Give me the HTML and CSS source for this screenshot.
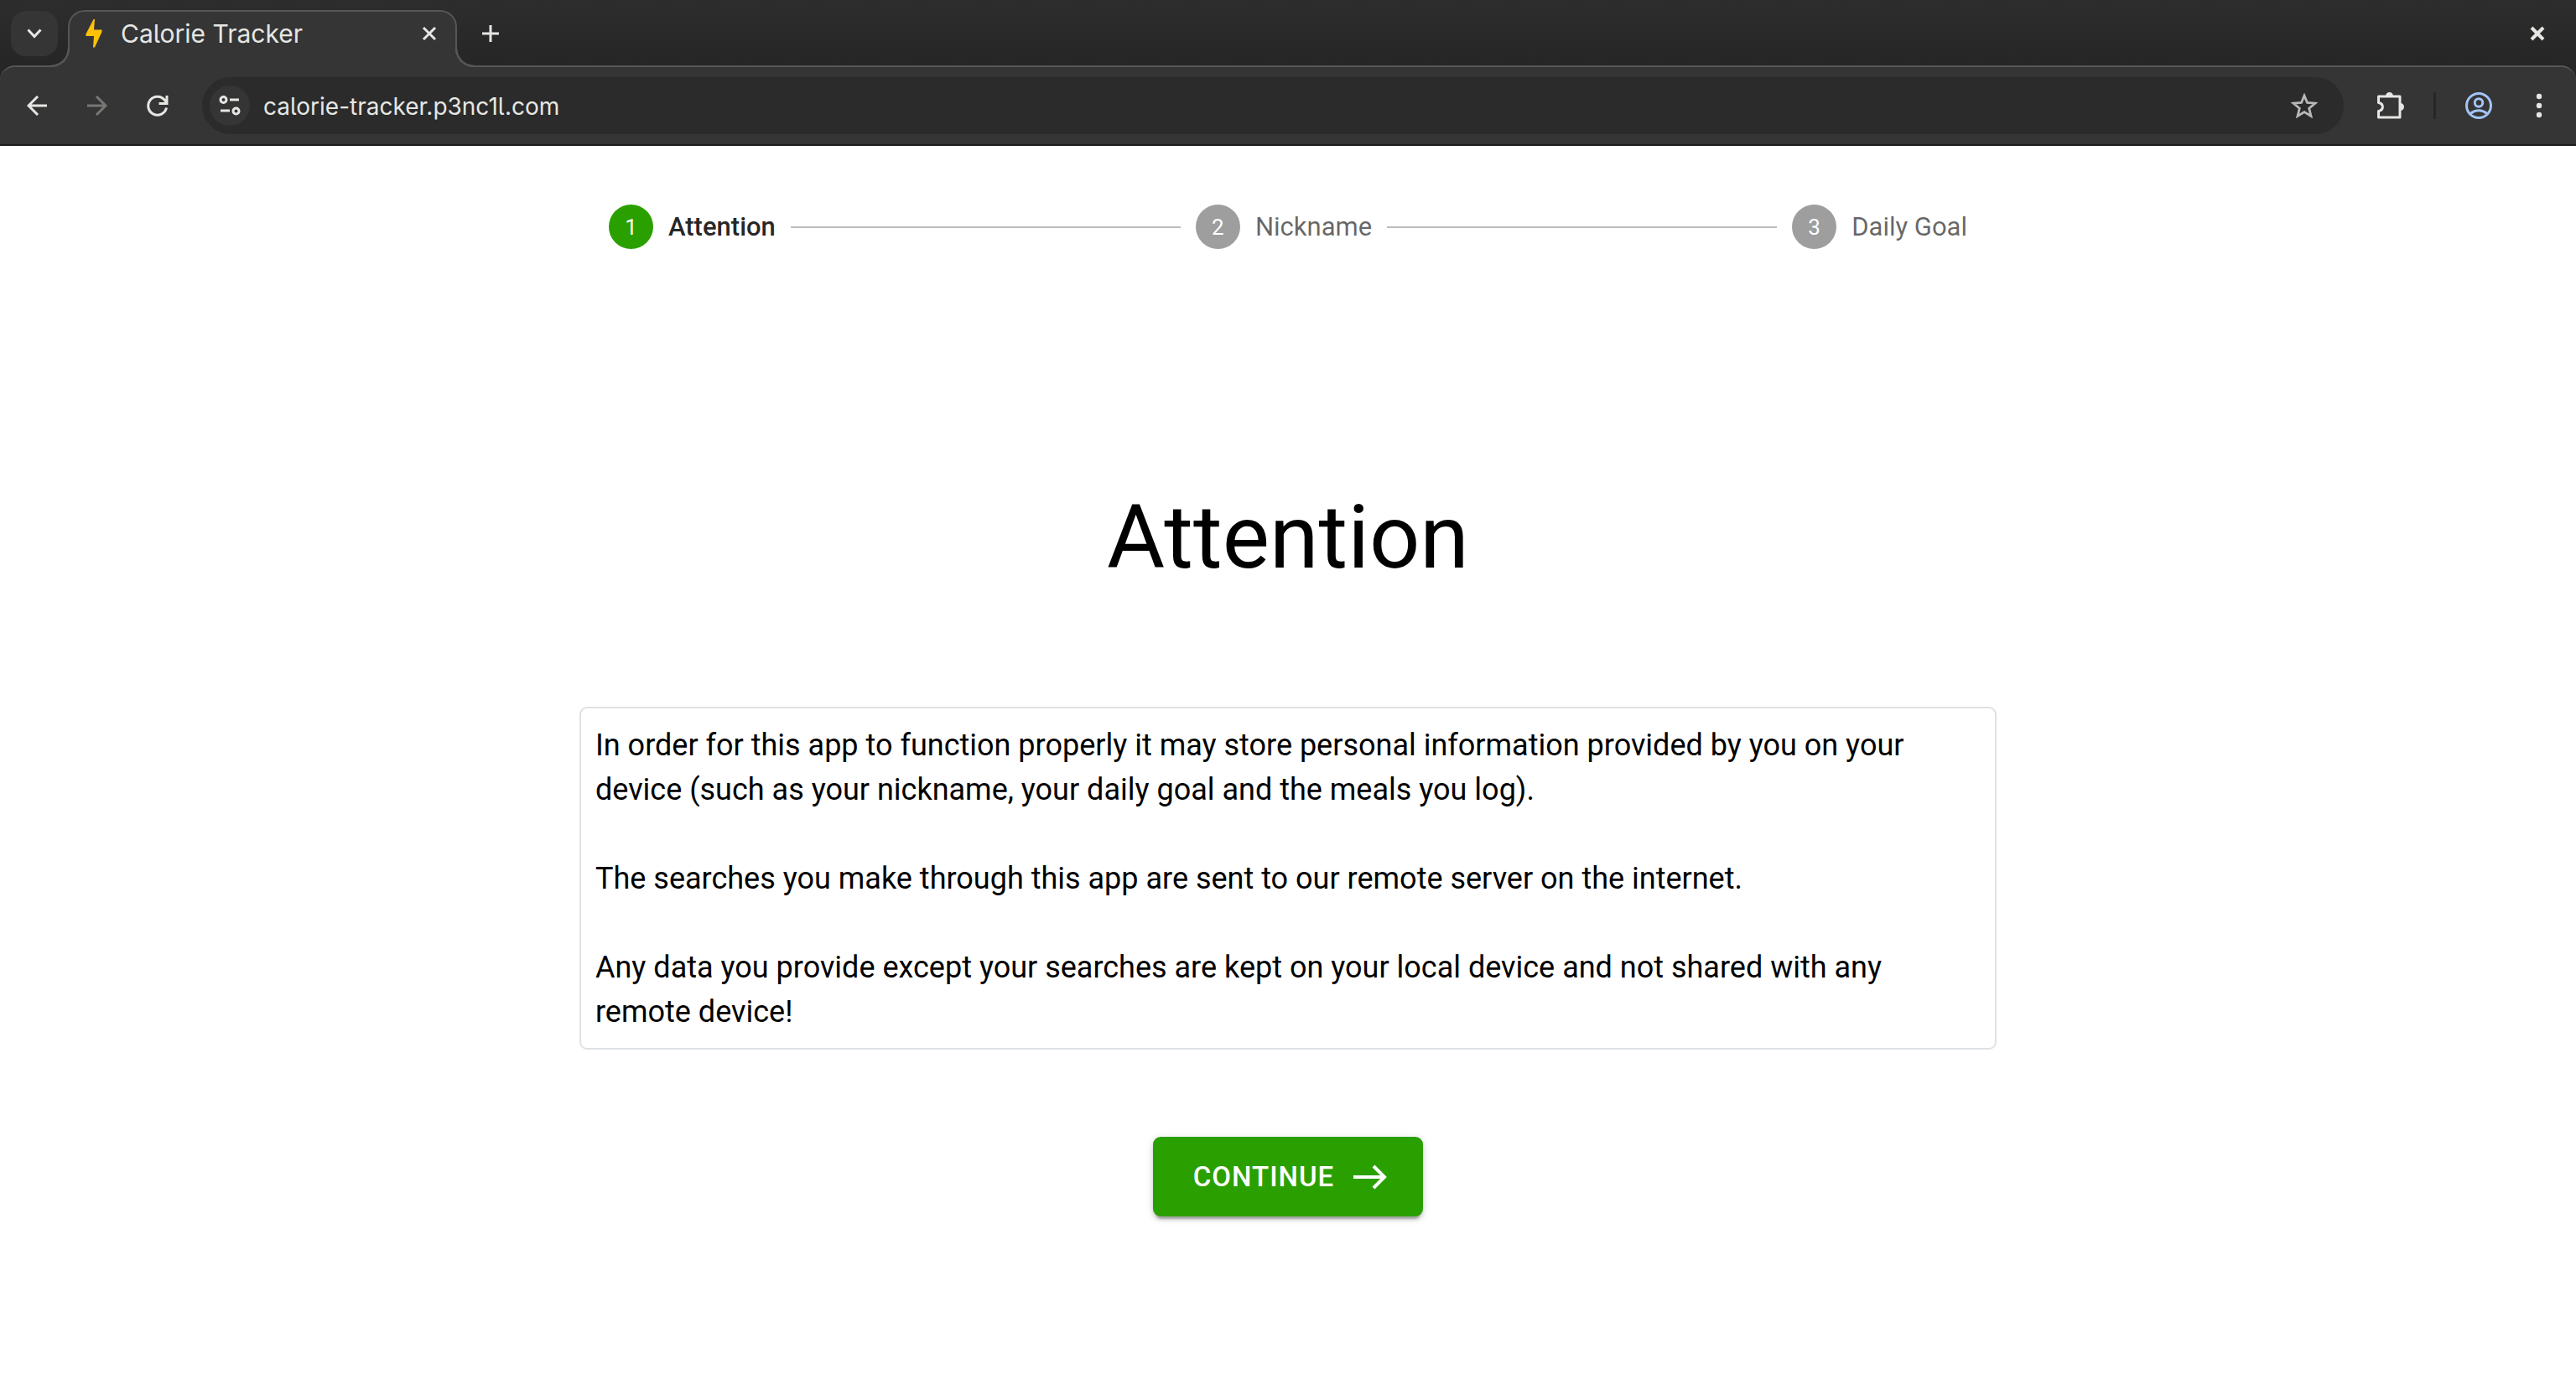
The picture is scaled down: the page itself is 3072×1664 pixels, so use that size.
FILE: index.html
```html
<!DOCTYPE html>
<html lang="en">
<head>
<meta charset="utf-8">
<meta name="viewport" content="width=device-width, initial-scale=1">
<title>Calorie Tracker</title>
<link rel="stylesheet" href="styles.css">
</head>
<body>
<header class="browser">
  <div class="tab-strip">
    <button class="tab-search" type="button" aria-label="Search tabs">
      <svg width="20" height="14" viewBox="0 0 20 14" fill="none" stroke="currentColor" stroke-width="3"><path d="M2.500 2.500 10 10.500 17.500 2.500"/></svg>
    </button>
    <div class="tab">
      <svg class="favicon" width="20" height="34" viewBox="0 0 20 34" fill="#ffc107"><path d="M9.500 0H11L10 12.500H19.500V15L11 33.500H9L10 20H.500V17.500Z"/></svg>
      <span class="tab-title">Calorie Tracker</span>
      <button class="icon-button small" type="button" aria-label="Close tab">
        <svg width="18" height="18" viewBox="0 0 18 18" fill="none" stroke="currentColor" stroke-width="3"><path d="m2 2 14 14M16 2 2 16"/></svg>
      </button>
    </div>
    <button class="icon-button new-tab" type="button" aria-label="New tab">
      <svg width="22" height="22" viewBox="0 0 22 22" fill="none" stroke="currentColor" stroke-width="3"><path d="M11 1v20M1 11h20"/></svg>
    </button>
    <button class="icon-button window-close" type="button" aria-label="Close window">
      <svg width="18" height="18" viewBox="0 0 18 18" fill="none" stroke="currentColor" stroke-width="4"><path d="m2 2 14 14M16 2 2 16"/></svg>
    </button>
  </div>
  <div class="toolbar">
    <nav class="nav-buttons" aria-label="Browser navigation">
      <button class="icon-button" type="button" aria-label="Back">
        <svg width="24" height="24" viewBox="0 0 24 24" fill="none" stroke="currentColor" stroke-width="3"><path d="M24 12H2M13 1 2 12l11 11"/></svg>
      </button>
      <button class="icon-button" type="button" aria-label="Forward" disabled>
        <svg width="24" height="24" viewBox="0 0 24 24" fill="none" stroke="currentColor" stroke-width="3"><path d="M0 12h22M11 1l11 11-11 11"/></svg>
      </button>
      <button class="icon-button" type="button" aria-label="Reload">
        <svg width="26" height="26" viewBox="0 0 26 26" fill="none" stroke="currentColor" stroke-width="3"><path d="M23.500 15.500A11 11 0 1 1 21.500 6.500L23.500 9.500M24 1v9.500H14.500"/></svg>
      </button>
    </nav>
    <div class="omnibox">
      <button class="site-info" type="button" aria-label="View site information">
        <svg width="26" height="26" viewBox="0 0 26 26" fill="none" stroke="currentColor" stroke-width="3"><circle cx="5.500" cy="6" r="3.500"/><path d="M13 6h11M2 19h11"/><circle cx="20.500" cy="19.500" r="3.500"/></svg>
      </button>
      <input class="address" type="text" value="calorie-tracker.p3nc1l.com" aria-label="Address" spellcheck="false">
      <button class="bookmark" type="button" aria-label="Bookmark this page">
        <svg width="32" height="30" viewBox="0 0 32 30" fill="none" stroke="currentColor" stroke-width="2.800"><path d="M16 3 19.500 11.500 29 12.200 21.700 18.300 24 27.500 16 22.600 8 27.500 10.300 18.300 3 12.200 12.500 11.500Z"/></svg>
      </button>
    </div>
    <div class="tools">
      <button class="icon-button extensions" type="button" aria-label="Extensions">
        <svg width="34" height="34" viewBox="0 0 34 34"><path fill="none" stroke="currentColor" stroke-width="3" stroke-linejoin="round" d="M2.500 6H28V31H2.500V23.500C9 22.500 9 14.500 2.500 13.500Z"/><path fill="currentColor" d="M11 5.500a4.500 4.500 0 0 1 9 0zM28.500 14a4.500 4.500 0 0 1 0 9z"/></svg>
      </button>
      <span class="divider"></span>
      <button class="icon-button profile" type="button" aria-label="Profile">
        <svg width="34" height="34" viewBox="0 0 34 34" fill="none" stroke="currentColor" stroke-width="3"><circle cx="17" cy="17" r="14.500"/><circle cx="17" cy="13.500" r="4.700"/><path d="M7 26.500Q17 19 27 26.500"/></svg>
      </button>
      <button class="icon-button" type="button" aria-label="Menu">
        <svg width="8" height="30" viewBox="0 0 8 30" fill="currentColor"><circle cx="4" cy="4" r="3.200"/><circle cx="4" cy="15" r="3.200"/><circle cx="4" cy="26" r="3.200"/></svg>
      </button>
    </div>
  </div>
</header>

<main class="page">
  <ol class="stepper">
    <li class="step active" aria-current="step"><span class="step-icon">1</span>Attention</li>
    <li class="connector" aria-hidden="true"></li>
    <li class="step"><span class="step-icon">2</span>Nickname</li>
    <li class="connector" aria-hidden="true"></li>
    <li class="step"><span class="step-icon">3</span>Daily Goal</li>
  </ol>
  <h1 class="title">Attention</h1>
  <section class="notice">
    <p>In order for this app to function properly it may store personal information provided by you on your device (such as your nickname, your daily goal and the meals you log).</p>
    <p>The searches you make through this app are sent to our remote server on the internet.</p>
    <p>Any data you provide except your searches are kept on your local device and not shared with any remote device!</p>
  </section>
  <button class="continue" type="button">CONTINUE
    <svg width="42" height="30" viewBox="0 0 42 30" fill="none" stroke="currentColor" stroke-width="4"><path d="M1 15H38M25 2 38 15 25 28"/></svg>
  </button>
</main>
</body>
</html>
```
FILE: styles.css
```css
* {
  box-sizing: border-box;
}

body {
  margin: 0;
  background: #fff;
  color: #000;
  font-family: Roboto, "Liberation Sans", sans-serif;
}

button {
  margin: 0;
  padding: 0;
  border: 0;
  background: none;
  color: inherit;
  font: inherit;
}

svg {
  display: block;
}

/* Browser window */
.browser {
  background: linear-gradient(#2d2d2d, #262626 78px);
  color: #e6e6e3;
  font-family: Inter, "Liberation Sans", sans-serif;
  font-size: 28px;
  font-feature-settings: "cv05";
}

.tab-strip {
  display: flex;
  align-items: center;
  height: 80px;
  padding: 0 16px 0 13px;
}

.tab-search {
  display: grid;
  place-items: center;
  width: 56px;
  height: 54px;
  border-radius: 18px;
  background: #353535;
}

.tab {
  position: relative;
  z-index: 1;
  display: flex;
  align-items: center;
  align-self: flex-end;
  width: 464px;
  height: 68px;
  margin-left: 12px;
  padding: 0 13px 14px 19px;
  border: 2px solid #565656;
  border-bottom: 0;
  border-radius: 20px 20px 0 0;
  background: #353535;
}

/* Curved feet joining the tab to the toolbar */
.tab::before,
.tab::after {
  content: "";
  position: absolute;
  bottom: 0;
  width: 22px;
  height: 22px;
}

.tab::before {
  left: -22px;
  background: radial-gradient(circle at 0 0, transparent 19px, #565656 20px 22px, #353535 22px);
}

.tab::after {
  right: -22px;
  background: radial-gradient(circle at 100% 0, transparent 19px, #565656 20px 22px, #353535 22px);
}

.tab-title {
  flex: 1;
  margin-left: 22px;
  font-size: 30px;
}

.icon-button {
  display: grid;
  place-items: center;
  width: 60px;
  height: 60px;
}

.icon-button:disabled {
  color: #777773;
}

.small {
  width: 36px;
  height: 36px;
}

.new-tab {
  margin-left: 10px;
}

.window-close {
  margin-left: auto;
}

.toolbar {
  display: flex;
  align-items: center;
  margin-top: -2px;
  padding: 12px 14px;
  border-top: 2px solid #565656;
  border-bottom: 2px solid #1c1c1c;
  border-radius: 18px 18px 0 0;
  background: #353535;
}

.nav-buttons {
  display: flex;
  gap: 12px;
}

.omnibox {
  display: flex;
  flex: 1;
  align-items: center;
  height: 68px;
  margin: 0 26px 0 23px;
  padding: 0 31px 0 9px;
  border-radius: 34px;
  background: #2b2b2b;
}

.site-info {
  display: grid;
  place-items: center;
  width: 48px;
  height: 48px;
  border-radius: 50%;
  background: #353535;
}

.address {
  flex: 1;
  min-width: 0;
  margin-left: 16px;
  padding: 2px 0 0;
  border: 0;
  outline: 0;
  background: none;
  color: inherit;
  font: inherit;
  font-feature-settings: inherit;
}

.bookmark {
  color: #b8b8b6;
}

.tools {
  display: flex;
  align-items: center;
}

.divider {
  width: 3px;
  height: 32px;
  margin: 0 21px;
  background: #262626;
}

.profile {
  margin-right: 12px;
  color: #a3c4f5;
}

/* Page */
.page {
  display: flex;
  flex-direction: column;
  align-items: center;
  width: 100%;
  max-width: 1690px;
  margin: 0 auto;
  padding: 70px 0 96px;
}

.stepper {
  display: flex;
  align-items: center;
  align-self: stretch;
  gap: 18px;
  margin: 0;
  padding: 0 35px;
  list-style: none;
}

.step {
  display: flex;
  align-items: center;
  gap: 18px;
  color: rgba(0, 0, 0, 0.6);
  font-size: 31px;
  line-height: 44px;
  white-space: nowrap;
}

.step-icon {
  display: grid;
  place-items: center;
  width: 53px;
  height: 53px;
  border-radius: 50%;
  background: #9e9e9e;
  color: #fff;
  font-size: 26px;
  font-weight: 400;
}

.active {
  color: rgba(0, 0, 0, 0.87);
  font-weight: 500;
}

.active .step-icon {
  background: #2aa000;
}

.connector {
  flex: 1;
  height: 2px;
  background: #bdbdbd;
}

.title {
  margin: 282px 0 140px;
  font-size: 106px;
  font-weight: 400;
  line-height: 124px;
}

.notice {
  display: grid;
  gap: 53px;
  align-self: stretch;
  padding: 18px 17px 16px;
  border: 2px solid #dee2e6;
  border-radius: 9px;
  font-size: 36px;
  line-height: 53px;
}

.notice p {
  margin: 0;
}

.continue {
  display: flex;
  align-items: center;
  gap: 22px;
  height: 95px;
  margin-top: 104px;
  padding: 0 42px 0 48px;
  border-radius: 9px;
  background: #2aa000;
  box-shadow: 0 7px 2px -4px rgba(0, 0, 0, 0.2), 0 4px 4px rgba(0, 0, 0, 0.14), 0 2px 11px rgba(0, 0, 0, 0.12);
  color: #fff;
  font-size: 33px;
  font-weight: 500;
  letter-spacing: 1px;
}
```
